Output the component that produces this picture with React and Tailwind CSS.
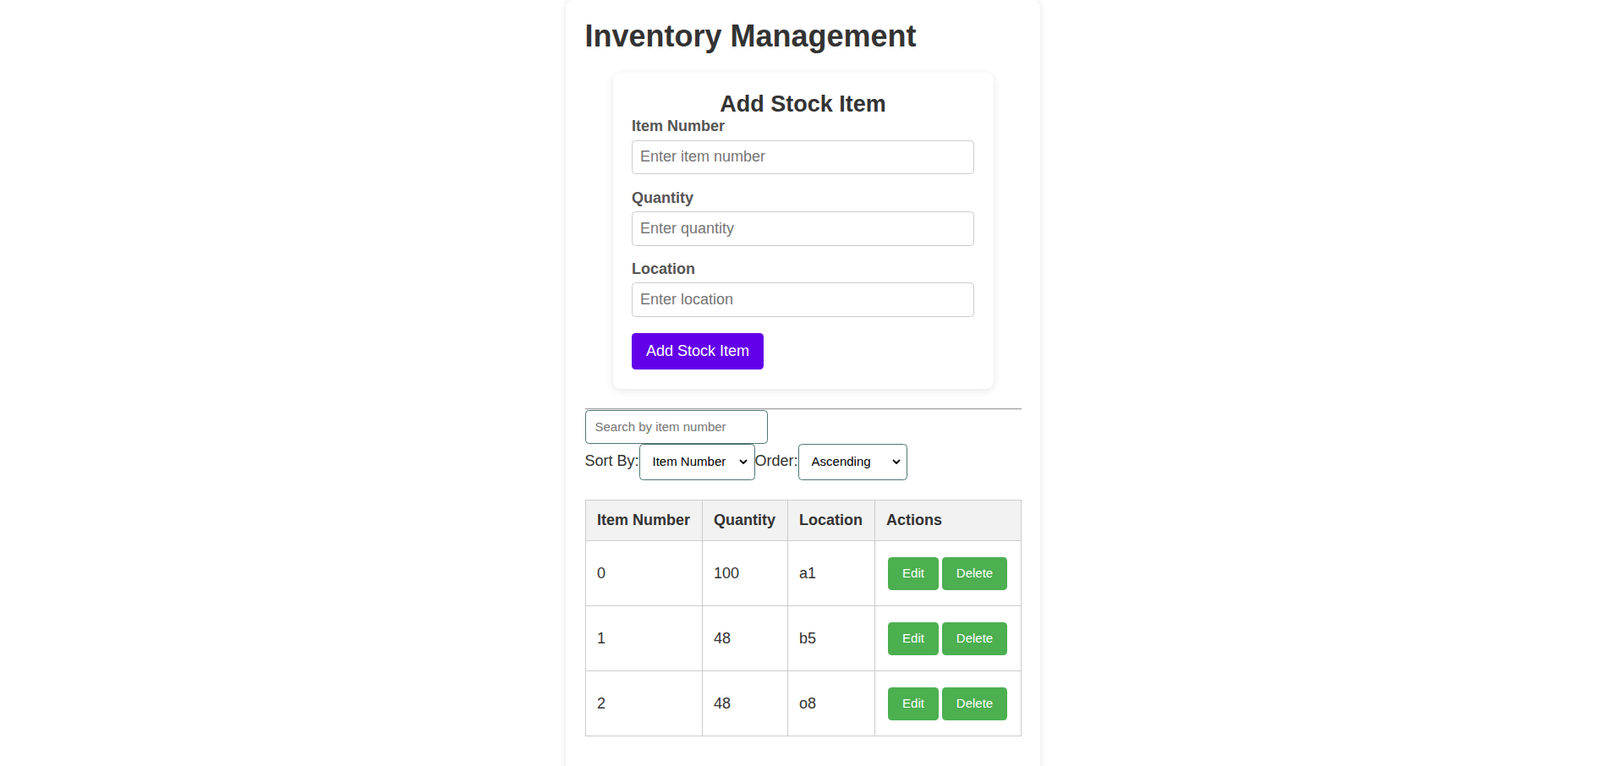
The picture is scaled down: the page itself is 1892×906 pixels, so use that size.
import React from "react";

function Chevron() {
  return (
    <svg width="10" height="7" viewBox="0 0 10 7" fill="none">
      <path d="M1.5 1.5 L5 5 L8.5 1.5" stroke="#111" strokeWidth="1.8" strokeLinecap="round" strokeLinejoin="round" />
    </svg>
  );
}

function Field({ label, placeholder, mb }) {
  return (
    <div className={mb}>
      <label className="block text-[18px] leading-[20.7px] font-bold text-[#555] mb-[5.6px]">{label}</label>
      <input
        type="text"
        placeholder={placeholder}
        className="block w-full h-[40.5px] border border-[#ccc] rounded-[4.5px] px-[9px] text-[18px] text-[#333] placeholder:text-[#757575] outline-none"
      />
    </div>
  );
}

const rows = [
  { n: "0", q: "100", l: "a1" },
  { n: "1", q: "48", l: "b5" },
  { n: "2", q: "48", l: "o8" },
];

export default function App() {
  return (
    <div className="bg-white h-[906px] overflow-hidden flex justify-center pl-[7px]" style={{ fontFamily: '"Liberation Sans", Arial, sans-serif' }}>
      <div className="w-[561px] h-[930px] shrink-0 bg-white rounded-t-[9px] shadow-[0_0_10px_rgba(0,0,0,0.1)] px-[22.5px] pt-[22px]">
        <h1 className="text-[36px] leading-[41.4px] font-bold text-[#333] mb-[22.5px]">Inventory Management</h1>

        <div className="w-[450px] mx-auto bg-white rounded-[9px] shadow-[0_2px_10px_rgba(0,0,0,0.1)] p-[22.5px]">
          <h2 className="text-[27px] leading-[31px] font-bold text-[#333] text-center">Add Stock Item</h2>
          <Field label="Item Number" placeholder="Enter item number" mb="mb-[17.5px]" />
          <Field label="Quantity" placeholder="Enter quantity" mb="mb-[17.5px]" />
          <Field label="Location" placeholder="Enter location" mb="mb-[19px]" />
          <button className="h-[43.4px] px-[17px] bg-[#6200ea] text-white text-[18px] leading-[20.7px] rounded-[4.5px]">
            Add Stock Item
          </button>
        </div>

        <div className="mt-[23px] h-0 border-t border-b border-t-[#9a9a9a] border-b-[#eeeeee]"></div>

        <input
          type="text"
          placeholder="Search by item number"
          className="block w-[216px] h-[40px] border border-[#4f7474] rounded-[4.5px] pl-[11px] text-[15px] text-[#333] placeholder:text-[#757575] outline-none"
        />

        <div className="flex items-baseline text-[18px] text-[#333]">
          <span>Sort By:</span>
          <div className="relative">
            <select className="appearance-none w-[137px] h-[43px] border border-[#4f7474] rounded-[4.5px] pl-[15px] text-[15px] text-black bg-white outline-none">
              <option>Item Number</option>
              <option>Quantity</option>
              <option>Location</option>
            </select>
            <span className="absolute right-[9px] top-[18px] pointer-events-none"><Chevron /></span>
          </div>
          <span>Order:</span>
          <div className="relative">
            <select className="appearance-none w-[129.5px] h-[43px] border border-[#4f7474] rounded-[4.5px] pl-[15px] text-[15px] text-black bg-white outline-none">
              <option>Ascending</option>
              <option>Descending</option>
            </select>
            <span className="absolute right-[8px] top-[18px] pointer-events-none"><Chevron /></span>
          </div>
        </div>

        <table className="mt-[23px] w-[515px] table-fixed border-collapse text-[18px] text-[#333]">
          <colgroup>
            <col className="w-[138px]" />
            <col className="w-[101px]" />
            <col className="w-[103px]" />
            <col className="w-[173px]" />
          </colgroup>
          <thead>
            <tr className="bg-[#f2f2f2]">
              {["Item Number", "Quantity", "Location", "Actions"].map((h) => (
                <th key={h} className="border border-[#ccc] px-[13.5px] py-[13.5px] text-left font-bold leading-[20.7px] whitespace-nowrap">
                  {h}
                </th>
              ))}
            </tr>
          </thead>
          <tbody>
            {rows.map((r) => (
              <tr key={r.n}>
                <td className="border border-[#ccc] px-[13.5px] py-[13.5px] align-middle leading-[20.7px]">{r.n}</td>
                <td className="border border-[#ccc] px-[13.5px] py-[13.5px] align-middle leading-[20.7px]">{r.q}</td>
                <td className="border border-[#ccc] px-[13.5px] py-[13.5px] align-middle leading-[20.7px]">{r.l}</td>
                <td className="border border-[#ccc] px-[13.5px] py-[13.5px] align-middle">
                  <div className="h-[49px] flex items-center gap-[4px] pl-[2px]">
                    <button className="h-[39.7px] w-[60px] bg-[#4caf50] text-white text-[15px] rounded-[4.5px]">Edit</button>
                    <button className="h-[39.7px] w-[77px] bg-[#4caf50] text-white text-[15px] rounded-[4.5px]">Delete</button>
                  </div>
                </td>
              </tr>
            ))}
          </tbody>
        </table>
      </div>
    </div>
  );
}
